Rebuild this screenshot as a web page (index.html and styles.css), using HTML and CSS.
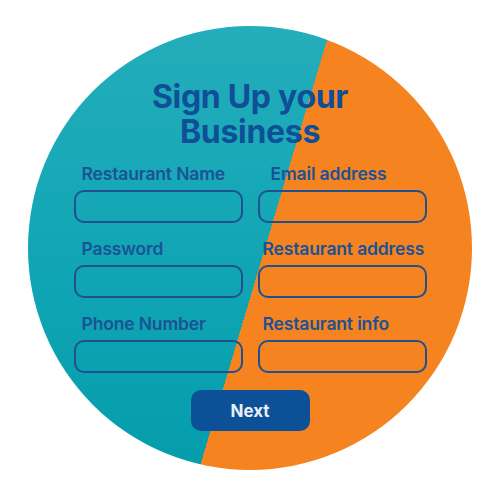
FILE: index.html
```html
<!DOCTYPE html>
<html lang="en">
<head>
<meta charset="utf-8">
<title>Sign Up your Business</title>
<link rel="stylesheet" href="styles.css">
</head>
<body>
<div class="stage">
  <div class="disc">
    <h1 class="title">Sign Up your<br>Business</h1>
    <form class="form">
      <div class="field">
        <label class="label">Restaurant Name</label>
        <div class="box"></div>
      </div>
      <div class="field">
        <label class="label label-email">Email address</label>
        <div class="box"></div>
      </div>
      <div class="field">
        <label class="label">Password</label>
        <div class="box"></div>
      </div>
      <div class="field">
        <label class="label label-right">Restaurant address</label>
        <div class="box"></div>
      </div>
      <div class="field">
        <label class="label">Phone Number</label>
        <div class="box"></div>
      </div>
      <div class="field">
        <label class="label label-right">Restaurant info</label>
        <div class="box"></div>
      </div>
    </form>
    <div class="actions">
      <button class="next" type="button">Next</button>
    </div>
  </div>
</div>
</body>
</html>
```
FILE: styles.css
```css
html, body {
  margin: 0;
  padding: 0;
  background: #ffffff;
}
.stage {
  width: 500px;
  height: 500px;
  padding: 26px 0 0 28px;
  box-sizing: border-box;
}
.disc {
  width: 444px;
  height: 444px;
  border-radius: 50%;
  background:
    linear-gradient(106.6deg, transparent 52.6%, #f5831f 52.6%),
    linear-gradient(180deg, #24adbb 0%, #12a6b5 50%, #049dab 100%);
  box-sizing: border-box;
  padding-top: 53px;
  font-family: Inter, "Liberation Sans", sans-serif;
  display: flex;
  flex-direction: column;
  align-items: center;
}
.title {
  margin: 0;
  font-size: 32px;
  line-height: 35px;
  font-weight: 700;
  color: #0e4f98;
  text-align: center;
  letter-spacing: -0.3px;
}
.form {
  margin: 15px 0 0 0;
  display: grid;
  grid-template-columns: 169px 169px;
  column-gap: 15px;
  row-gap: 16px;
}
.field {
  display: flex;
  flex-direction: column;
  gap: 6px;
}
.label {
  font-size: 17.5px;
  line-height: 20px;
  font-weight: 600;
  color: #1b5296;
  padding-left: 8px;
  letter-spacing: -0.15px;
  white-space: nowrap;
}
.label-email { padding-left: 13px; }
.label-right { padding-left: 5px; }
.box {
  height: 33px;
  box-sizing: border-box;
  border: 2px solid #1f5090;
  border-radius: 10px;
}
.actions {
  margin-top: 17px;
}
.next {
  width: 119px;
  height: 41px;
  border: none;
  border-radius: 10px;
  background: #0c5098;
  color: #e8eff6;
  font-family: Inter, "Liberation Sans", sans-serif;
  font-size: 17px;
  font-weight: 700;
  padding: 0;
}
```
